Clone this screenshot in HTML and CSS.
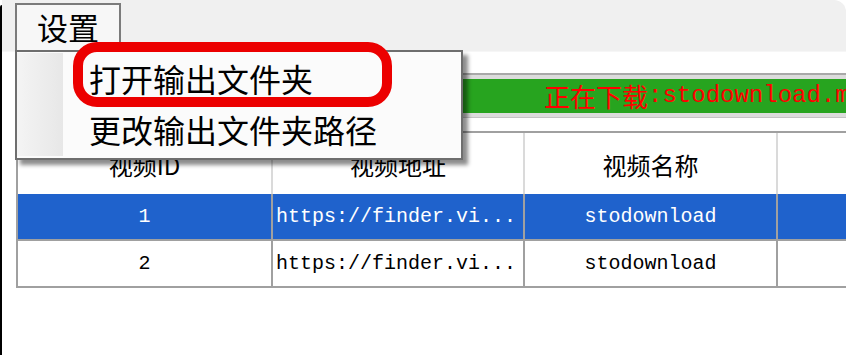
FILE: index.html
```html
<!DOCTYPE html>
<html lang="zh-CN">
<head>
<meta charset="utf-8">
<title>设置</title>
<link rel="stylesheet" href="styles.css">
</head>
<body>
<div class="edge"></div>
<div class="window">
  <div class="menubar">
    <div class="menu-btn">设置</div>
  </div>
  <div class="content">
    <div class="progress">
      <div class="progress-fill"><span class="p-cjk">正在下载</span><span class="p-mono">:stodownload.mp4</span></div>
    </div>
    <div class="grid">
      <div class="row head">
        <div class="cell">视频ID</div>
        <div class="cell">视频地址</div>
        <div class="cell">视频名称</div>
        <div class="cell"></div>
      </div>
      <div class="row data sel">
        <div class="cell">1</div>
        <div class="cell left">https://finder.vi...</div>
        <div class="cell">stodownload</div>
        <div class="cell"></div>
      </div>
      <div class="row data">
        <div class="cell">2</div>
        <div class="cell left">https://finder.vi...</div>
        <div class="cell">stodownload</div>
        <div class="cell"></div>
      </div>
    </div>
  </div>
  <div class="dropdown">
    <div class="gutter"></div>
    <div class="items">
      <div class="item">打开输出文件夹</div>
      <div class="item">更改输出文件夹路径</div>
    </div>
  </div>
  <div class="highlight"></div>
</div>
</body>
</html>
```
FILE: styles.css
```css
html, body {
  margin: 0;
  padding: 0;
  background: #ffffff;
}
body {
  width: 846px;
  height: 362px;
  overflow: hidden;
  display: flex;
  font-family: "Noto Sans CJK SC", "Noto Sans", sans-serif;
}
.edge {
  width: 2px;
  margin-top: 5px;
  height: 350px;
  background: #000;
  border-top-left-radius: 2px;
}
.window {
  position: relative;
  flex: 1;
  height: 362px;
  overflow: hidden;
  background: #fff;
  border-top-right-radius: 12px;
}
.menubar {
  height: 52px;
  box-sizing: border-box;
  padding: 3px 0 0 13px;
  background: #f0f0f0;
  border-bottom: 1px solid #f6f6f6;
}
.menu-btn {
  width: 106px;
  height: 49px;
  box-sizing: border-box;
  border: 2px solid #7b7b7b;
  border-bottom: 0;
  background: #f7f7f7;
  display: flex;
  justify-content: center;
  align-items: center;
  padding-bottom: 5px;
  font-size: 31px;
  line-height: 1;
  color: #000;
}
.content {
  padding: 21px 0 0 14px;
}
.progress {
  width: 900px;
  background: #dcdcdc;
  border-top: 2px solid #a9a9a9;
  border-bottom: 1px solid #c4c4c4;
  padding: 4px 0;
}
.progress-fill {
  height: 34px;
  background: #27a41f;
  display: flex;
  align-items: center;
  padding-left: 528px;
  white-space: nowrap;
  color: #ff0000;
}
.p-cjk {
  font-family: "Noto Sans CJK SC", sans-serif;
  font-size: 26px;
  line-height: 1;
}
.p-mono {
  font-family: "Liberation Mono", monospace;
  font-size: 24px;
  line-height: 1;
}
.grid {
  margin-top: 13px;
  width: 1014px;
  border-top: 2px solid #a0a0a0;
  border-left: 2px solid #a0a0a0;
}
.row {
  display: grid;
  grid-template-columns: 255px 252px 253px 252px;
}
.cell {
  box-sizing: border-box;
  display: flex;
  align-items: center;
  justify-content: center;
  white-space: nowrap;
  overflow: hidden;
}
.head .cell {
  height: 61px;
  border-right: 2px solid #dadada;
  font-size: 24px;
  color: #000;
  padding-top: 1px;
}
.data .cell {
  height: 47px;
  border-right: 2px solid #a0a0a0;
  border-bottom: 2px solid #a0a0a0;
  font-family: "Liberation Mono", monospace;
  font-size: 20px;
  color: #000;
}
.data .cell.left {
  justify-content: flex-start;
  padding-left: 3px;
}
.sel .cell {
  background: #1f62cc;
  color: #fff;
}
.dropdown {
  position: absolute;
  left: 13px;
  top: 50px;
  width: 448px;
  height: 110px;
  box-sizing: border-box;
  border: 2px solid #6e6e6e;
  background: #fbfbfb;
  box-shadow: 5px 5px 4px rgba(0, 0, 0, 0.45);
  display: flex;
}
.gutter {
  width: 46px;
  margin: 1px 0 2px;
  background: linear-gradient(to right, #f4f4f4, #e7e7e7);
}
.items {
  display: flex;
  flex-direction: column;
  padding-left: 26px;
}
.item {
  height: 51px;
  display: flex;
  align-items: center;
  font-size: 32px;
  line-height: 1;
  color: #000;
  white-space: nowrap;
}
.highlight {
  position: absolute;
  left: 71px;
  top: 42px;
  width: 319px;
  height: 65px;
  box-sizing: border-box;
  border: 10px solid #ec0000;
  border-radius: 24px;
}
```
